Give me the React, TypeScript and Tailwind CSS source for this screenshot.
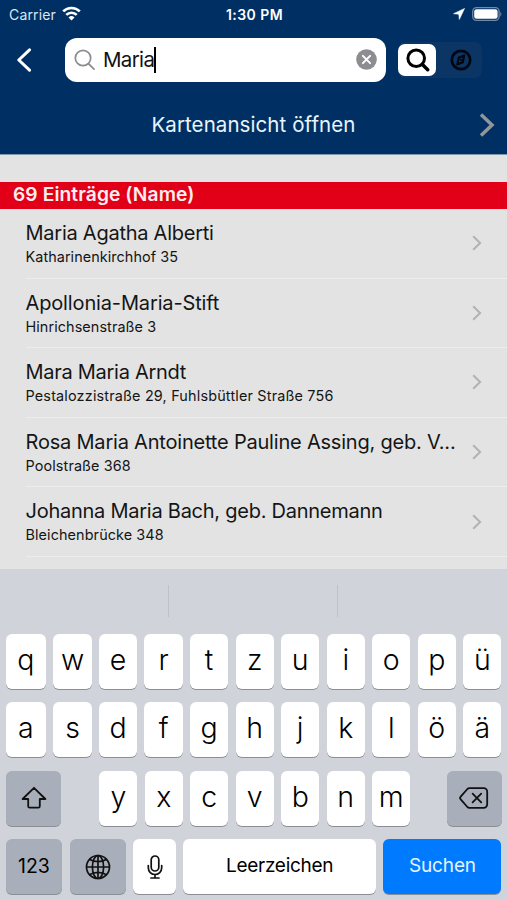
import clsx from "clsx";

interface EntryProps {
  name: string;
  address: string;
  nameClass: string;
  addressClass: string;
}

const entries: EntryProps[] = [
  {
    name: "Maria Agatha Alberti",
    address: "Katharinenkirchhof 35",
    nameClass: "tracking-[-0.25px]",
    addressClass: "tracking-[0.07px]",
  },
  {
    name: "Apollonia-Maria-Stift",
    address: "Hinrichsenstraße 3",
    nameClass: "tracking-[-0.14px]",
    addressClass: "tracking-[0.09px]",
  },
  {
    name: "Mara Maria Arndt",
    address: "Pestalozzistraße 29, Fuhlsbüttler Straße 756",
    nameClass: "tracking-[-0.28px]",
    addressClass: "tracking-[0.18px]",
  },
  {
    name: "Rosa Maria Antoinette Pauline Assing, geb. V...",
    address: "Poolstraße 368",
    nameClass: "tracking-[-0.2px]",
    addressClass: "tracking-[0.12px]",
  },
  {
    name: "Johanna Maria Bach, geb. Dannemann",
    address: "Bleichenbrücke 348",
    nameClass: "tracking-[-0.25px]",
    addressClass: "tracking-[0.1px]",
  },
];

const StatusBar = () => (
  <div className="grid h-7 grid-cols-3 items-center pr-[5px] pl-[9px] text-[14px] text-white">
    <div className="flex items-center gap-1.5">
      <span className="tracking-[0.15px] text-[#dce6f2]">Carrier</span>
      <svg className="-mt-0.5" width="19" height="15" viewBox="0 0 19 15" fill="none" stroke="white" strokeWidth="2.7">
        <path d="M1.2 5.4a11.8 11.8 0 0 1 16.6 0" />
        <path d="M4.3 8.9a7.4 7.4 0 0 1 10.4 0" />
        <path d="M9.5 14.6 6.5 11.5a4.3 4.3 0 0 1 6 0z" fill="white" stroke="none" />
      </svg>
    </div>
    <span className="-ml-0.5 text-center font-semibold tracking-[0.45px]">1:30 PM</span>
    <div className="flex items-center justify-end gap-[7px]">
      <svg width="12" height="12" viewBox="0 0 11 11" fill="white" stroke="white" strokeWidth=".5" strokeLinejoin="round">
        <path d="M10.6.4.5 5.2 5.3 5.7 5.8 10.5z" />
      </svg>
      <svg className="-mt-px" width="30" height="14" viewBox="0 0 30 14">
        <rect x=".7" y=".7" width="26.4" height="12.6" rx="3.8" fill="none" stroke="#7189a8" strokeWidth="1.3" />
        <rect x="2.2" y="2.2" width="23.4" height="9.6" rx="2.4" fill="white" />
        <path d="M28.3 4.7c1.5.7 1.5 3.9 0 4.6z" fill="#7189a8" />
      </svg>
    </div>
  </div>
);

const SearchHeader = () => (
  <div className="flex h-[62px] items-center pt-px pl-4">
    <svg width="16" height="24" viewBox="0 0 16 24" fill="none" stroke="white" strokeWidth="3" strokeLinecap="round" strokeLinejoin="round">
      <path d="M13.5 1.8 2.8 12l10.7 10.2" />
    </svg>
    <div className="ml-[32.5px] flex h-11 w-[321px] items-center rounded-[12px] bg-white pr-[9px] pl-[9px]">
      <svg width="22" height="22" viewBox="0 0 22 22" fill="none" stroke="#8b8b90" strokeWidth="1.7" strokeLinecap="round">
        <circle cx="9" cy="9" r="7.7" />
        <path d="m14.7 14.9 5.3 5.3" />
      </svg>
      <span className="ml-[7.5px] pt-0.5 text-[20.5px] tracking-[-0.65px] text-[#111]">Maria</span>
      <span className="h-[26px] w-[2px] bg-black" />
      <svg className="ml-auto" width="21" height="21" viewBox="0 0 21 21">
        <circle cx="10.5" cy="10.5" r="10.3" fill="#8c8c91" />
        <path d="m6.9 6.9 7.2 7.2m0-7.2-7.2 7.2" stroke="white" strokeWidth="2" strokeLinecap="round" />
      </svg>
    </div>
    <div className="ml-[12.5px] flex h-9 w-[84px] items-center rounded-[7px] bg-[#0b3565]">
      <span className="flex h-8 w-[38px] items-center justify-center rounded-[7px] bg-white pl-px">
        <svg width="24" height="24" viewBox="0 0 24 24" fill="none" stroke="black" strokeLinecap="round">
          <circle cx="10.2" cy="10.2" r="8.3" strokeWidth="3" />
          <path d="m16.7 16.7 5 5" strokeWidth="3.4" />
        </svg>
      </span>
      <span className="flex flex-1 items-center justify-center pl-[3px]">
        <svg width="22" height="22" viewBox="0 0 22 22" fill="none" stroke="#000610">
          <circle cx="11" cy="11" r="9.2" strokeWidth="2.7" />
          <path d="M14.1 6.6 8.8 8.8l-1.5 6.6 5.5-2.2z" strokeWidth="2.2" strokeLinejoin="round" />
          <circle cx="11" cy="11" r="1.1" fill="#000610" stroke="none" />
        </svg>
      </span>
    </div>
  </div>
);

const Entry: React.FC<EntryProps> = ({ name, address, nameClass, addressClass }) => (
  <li className="flex h-[69.6px] items-center pl-[25.5px]">
    <div className="flex h-full flex-1 items-center justify-between border-b border-[#ededed] pr-[25px]">
      <div className="pt-[1.5px] whitespace-nowrap text-[#151515]">
        <p className={clsx("text-[20px] leading-[26px]", nameClass)}>{name}</p>
        <p className={clsx("text-[14.4px] leading-[22px]", addressClass)}>{address}</p>
      </div>
      <svg className="-ml-3 shrink-0" width="10" height="16" viewBox="0 0 10 16" fill="none" stroke="#b2b2b4" strokeWidth="2">
        <path d="m1.2 1.2 6.9 6.8-6.9 6.8" />
      </svg>
    </div>
  </li>
);

const keyBase = "flex h-[55px] items-center justify-center rounded-[6px] shadow-[0_1px_0_#8b8e94]";

const LetterKey = ({ letter, wide }: { letter: string; wide?: boolean }) => (
  <span
    className={clsx(
      keyBase,
      wide ? "w-[40.4px]" : "w-[38.2px]",
      "bg-white pb-0.5 text-[28.5px] font-[350] text-black"
    )}
  >
    {letter}
  </span>
);

const Keyboard = () => (
  <div className="flex-1 bg-[#d0d3da] pr-[5.5px] pl-[5.7px] text-black">
    <div className="flex h-[64.7px] items-center">
      <span className="ml-[162px] h-8 w-px bg-[#bfc1c6]" />
      <span className="ml-[168px] h-8 w-px bg-[#bfc1c6]" />
    </div>
    <div className="flex flex-col gap-[13.5px]">
      <div className="flex justify-between">
        {[..."qwertzuiopü"].map((letter, i) => (
          <LetterKey key={letter} letter={letter} wide={i === 0} />
        ))}
      </div>
      <div className="flex justify-between">
        {[..."asdfghjklöä"].map((letter, i) => (
          <LetterKey key={letter} letter={letter} wide={i === 0} />
        ))}
      </div>
      <div className="flex">
        <span className={clsx(keyBase, "w-[55px] bg-[#a9afba]")}>
          <svg className="ml-0.5" width="26" height="24" viewBox="0 0 26 24" fill="none" stroke="#111" strokeWidth="1.8" strokeLinejoin="round">
            <path d="M13 1.8 1.6 13h5.6v7.2q0 1.5 1.5 1.5h8.6q1.5 0 1.5-1.5V13h5.6z" />
          </svg>
        </span>
        <div className="mr-[36.7px] ml-auto flex gap-[7.3px]">
          {[..."yxcvbnm"].map((letter) => (
            <LetterKey key={letter} letter={letter} />
          ))}
        </div>
        <span className={clsx(keyBase, "w-[54.5px] bg-[#a9afba]")}>
          <svg width="30" height="22" viewBox="0 0 30 22" fill="none" stroke="#111" strokeWidth="1.8" strokeLinecap="round" strokeLinejoin="round">
            <path d="M10.3 1.2h14.4a3.5 3.5 0 0 1 3.5 3.5v12.6a3.5 3.5 0 0 1-3.5 3.5H10.3q-1.1 0-1.9-.8L1.7 12.4q-1.2-1.4 0-2.8L8.4 2q.8-.8 1.9-.8z" />
            <path d="m13.6 6.6 8.6 8.8m0-8.8-8.6 8.8" />
          </svg>
        </span>
      </div>
      <div className="flex justify-between">
        <span className={clsx(keyBase, "w-[56.6px] bg-[#a9afba] text-[19.5px]")}>123</span>
        <span className={clsx(keyBase, "w-[56.3px] bg-[#a9afba]")}>
          <svg width="26" height="26" viewBox="0 0 26 26" fill="none" stroke="#111" strokeWidth="1.7">
            <circle cx="13" cy="13" r="11.5" />
            <ellipse cx="13" cy="13" rx="5.6" ry="11.5" />
            <path d="M13 1.5v23M1.5 13h23M4.3 5.2q8.7 5 17.4 0M4.3 20.8q8.7-5 17.4 0" />
          </svg>
        </span>
        <span className={clsx(keyBase, "w-[42.5px] bg-white")}>
          <svg width="16" height="24" viewBox="0 0 16 24" fill="none" stroke="#111" strokeWidth="1.7" strokeLinecap="round">
            <rect x="4.2" y="1" width="7.6" height="15" rx="3.8" />
            <path d="M1.3 10.5v2.3a6.7 6.7 0 0 0 13.4 0v-2.3M8 19.5V23M4 23h8" />
          </svg>
        </span>
        <span className={clsx(keyBase, "w-[193px] bg-white pb-px text-[19px] tracking-[-0.27px]")}>
          Leerzeichen
        </span>
        <span className={clsx(keyBase, "w-[118px] bg-[#007aff] pb-px text-[19px] tracking-[-0.15px] text-[#e6f4ff]")}>
          Suchen
        </span>
      </div>
    </div>
  </div>
);

const App: React.FC = () => {
  return (
    <div className="flex h-[900px] w-[507px] flex-col overflow-hidden bg-[#e3e3e3] font-['Inter',sans-serif]">
      <header className="h-[155px] shrink-0 border-b border-[#7f98b2] bg-[#003063]">
        <StatusBar />
        <SearchHeader />
        <div className="flex h-[70px] items-center pr-[12px] pl-[28px]">
          <span className="flex-1 text-center text-[20.5px] tracking-[0.08px] text-[#eaf4fc]">
            Kartenansicht öffnen
          </span>
          <svg width="16" height="24" viewBox="0 0 16 24" fill="none" stroke="#929699" strokeWidth="3.5">
            <path d="M2 1.5 13 12 2 22.5" />
          </svg>
        </div>
      </header>
      <h2 className="mt-[26.5px] h-[27px] shrink-0 bg-[#e10018] pl-[13px] text-[19.2px] leading-[25px] font-semibold tracking-[0.1px] text-[#fdeeee]">
        69 Einträge (Name)
      </h2>
      <ul className="h-[360.5px] shrink-0 overflow-hidden pt-[0.5px]">
        {entries.map((entry) => (
          <Entry key={entry.name} {...entry} />
        ))}
      </ul>
      <Keyboard />
    </div>
  );
};

export default App;
